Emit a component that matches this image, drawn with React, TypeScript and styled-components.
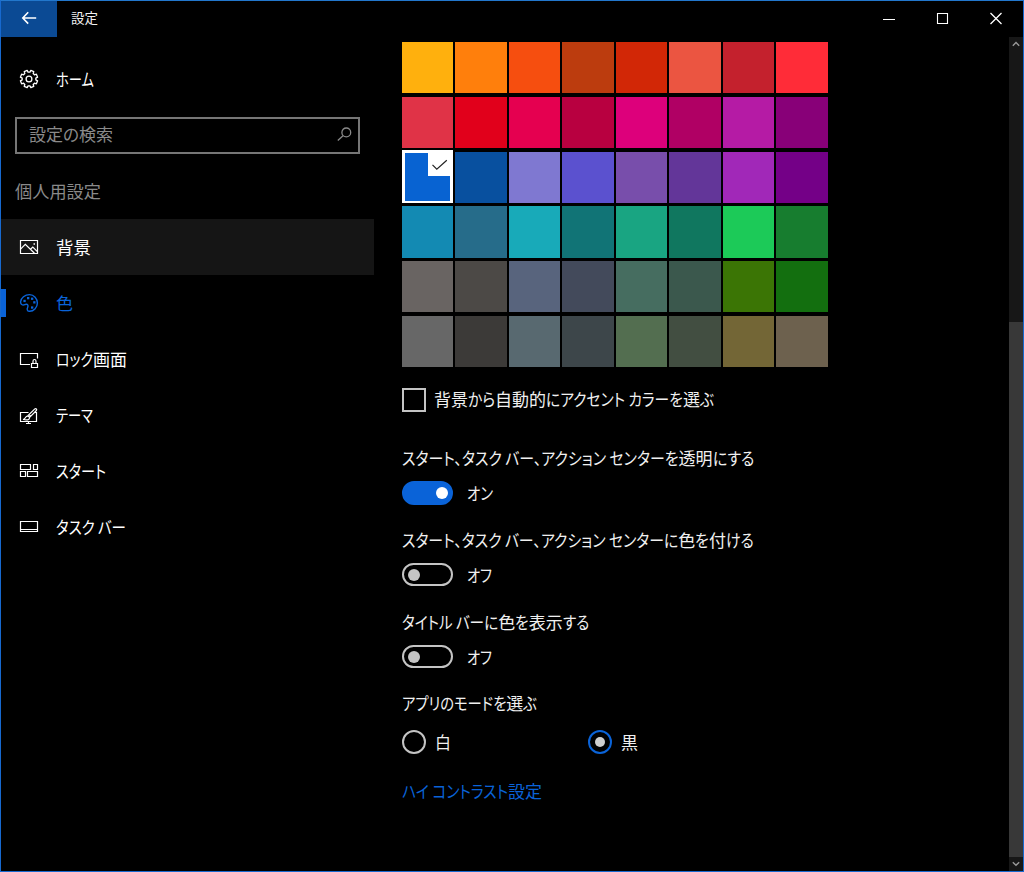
import React, { useLayoutEffect, useRef } from "react";
import styled, { createGlobalStyle } from "styled-components";

const ACCENT = "#0a63d8";

const GlobalStyle = createGlobalStyle`
  * { box-sizing: border-box; }
  body {
    margin: 0;
    background: #000;
    color: #f0f0f0;
    font-family: "Noto Sans CJK JP", "Noto Sans", sans-serif;
    font-size: 17px;
  }
`;

/* ---------- condensed kana text ---------- */

const Line = styled.span`
  display: inline-flex;
  white-space: pre;
  line-height: 22px;
  font-feature-settings: "palt" 1;
`;

const Run = styled.span`
  display: block;
  flex: none;
  transform-origin: 0 50%;
`;

const isKana = (c: string) => /[\u3001\u3040-\u30ff ]/.test(c);

function splitRuns(text: string) {
  const runs: { kana: boolean; value: string }[] = [];
  for (const c of text) {
    const kana = isKana(c);
    const last = runs[runs.length - 1];
    if (last && last.kana === kana) last.value += c;
    else runs.push({ kana, value: c });
  }
  return runs;
}

/* Kanji keep their full width; kana are condensed so the line fits `width`. */
function Text({ children, width }: { children: string; width: number }) {
  const ref = useRef<HTMLSpanElement>(null);
  const runs = splitRuns(children);
  useLayoutEffect(() => {
    const items = Array.from(ref.current!.children) as HTMLElement[];
    items.forEach((el) => {
      el.style.transform = "";
      el.style.marginRight = "";
    });
    const widths = items.map((el) => el.getBoundingClientRect().width);
    const sum = (kana: boolean) =>
      widths.reduce((a, w, i) => a + (runs[i].kana === kana ? w : 0), 0);
    const kanaWidth = sum(true);
    const allKanji = kanaWidth === 0;
    const k = allKanji ? width / sum(false) : (width - sum(false)) / kanaWidth;
    items.forEach((el, i) => {
      if (!allKanji && !runs[i].kana) return;
      el.style.transform = `scaleX(${k})`;
      el.style.marginRight = `${widths[i] * (k - 1)}px`;
    });
  }, [children, width]);
  return (
    <Line ref={ref}>
      {runs.map((r, i) => (
        <Run key={i}>{r.value}</Run>
      ))}
    </Line>
  );
}

/* ---------- window frame ---------- */

const Window = styled.div`
  width: 1024px;
  height: 872px;
  border: 1px solid #1769cf;
  border-top-color: #2277cc;
  display: flex;
  flex-direction: column;
  background: #000;
  overflow: hidden;
`;

const TitleBar = styled.header`
  height: 36px;
  flex: none;
  display: flex;
  align-items: center;
`;

const BackButton = styled.button`
  width: 56px;
  height: 36px;
  padding: 0 0 2px;
  border: 0;
  background: #0b4a94;
  color: #fff;
  display: flex;
  align-items: center;
  justify-content: center;
`;

const Title = styled.div`
  flex: 1;
  padding: 0 0 4px 14px;
  font-size: 13.5px;
  line-height: 0;
`;

const Caption = styled.button`
  width: 53.5px;
  height: 36px;
  padding: 0 0 2px;
  border: 0;
  background: none;
  color: #fff;
  display: flex;
  align-items: center;
  justify-content: center;
`;

const Body = styled.div`
  flex: 1;
  min-height: 0;
  display: flex;
`;

/* ---------- sidebar ---------- */

const Sidebar = styled.nav`
  width: 373px;
  flex: none;
  padding-top: 14px;
  display: flex;
  flex-direction: column;
`;

const NavItem = styled.a<{ $hover?: boolean; $active?: boolean }>`
  height: 56px;
  flex: none;
  display: flex;
  align-items: center;
  padding-left: ${(p) => (p.$active ? 0 : 19)}px;
  gap: 18px;
  color: ${(p) => (p.$active ? ACCENT : "#fff")};
  background: ${(p) => (p.$hover ? "#151515" : "transparent")};

  ${(p) => p.$active && `&::before {
    content: "";
    width: 5px;
    height: 28px;
    margin-right: -4px;
    background: ${ACCENT};
  }`}
`;

const SearchBox = styled.div`
  width: 345px;
  height: 37px;
  margin: 10px 0 0 14px;
  padding: 0 5px 3px 12px;
  border: 2px solid #767676;
  display: flex;
  align-items: center;
  justify-content: space-between;
  color: #8a8a8a;
`;

const SectionTitle = styled.div`
  height: 65px;
  padding: 26px 0 0 14px;
  color: #8a8a8a;
  line-height: 0;
`;

/* ---------- content ---------- */

const Content = styled.main`
  flex: 1;
  padding: 5px 0 0 28px;
  display: flex;
  flex-direction: column;
`;

const Palette = styled.div`
  display: grid;
  grid-template-columns: repeat(8, 51.4px);
  grid-auto-rows: 51.2px;
  gap: 3.6px 2.1px;
`;

const Swatch = styled.button<{ $color: string }>`
  padding: 0;
  border: 0;
  background: ${(p) => p.$color};
`;

const SelectedSwatch = styled(Swatch)`
  margin-top: -1.6px;
  border: solid #fff;
  border-width: 3px 3px 2px;
  display: flex;
  justify-content: flex-end;
  align-items: flex-start;
`;

const Tick = styled.span`
  width: 22px;
  height: 23px;
  background: #fff;
  display: flex;
`;

const CheckRow = styled.label`
  height: 24px;
  margin-top: 21px;
  display: flex;
  align-items: flex-start;
  gap: 8px;
`;

const CheckBox = styled.span`
  width: 24px;
  height: 24px;
  border: 2px solid #c4c4c4;
`;

const Setting = styled.section<{ $top: number }>`
  margin-top: ${(p) => p.$top}px;
  display: flex;
  flex-direction: column;
`;

const SettingName = styled.div`
  height: 34px;
  line-height: 0;
`;

const ToggleRow = styled.div`
  height: 24px;
  display: flex;
  align-items: center;
  gap: 14px;
`;

const Toggle = styled.span<{ $on?: boolean }>`
  width: 51.4px;
  height: ${(p) => (p.$on ? 24 : 23)}px;
  align-self: flex-start;
  border-radius: 12px;
  border: 2px solid ${(p) => (p.$on ? ACCENT : "#c4c4c4")};
  background: ${(p) => (p.$on ? ACCENT : "transparent")};
  display: flex;
  align-items: center;
  justify-content: ${(p) => (p.$on ? "flex-end" : "flex-start")};
  padding: 0 3.4px 0 4px;

  &::after {
    content: "";
    width: 12px;
    height: 12px;
    border-radius: 50%;
    background: ${(p) => (p.$on ? "#fff" : "#c4c4c4")};
  }
`;

const RadioRow = styled.div`
  height: 24px;
  display: flex;
  margin-top: 4px;
`;

const RadioOption = styled.label`
  width: 186px;
  display: flex;
  align-items: center;
  gap: 9px;
`;

const Radio = styled.span<{ $on?: boolean }>`
  width: 24px;
  height: 24px;
  border-radius: 50%;
  border: 2px solid ${(p) => (p.$on ? ACCENT : "#c4c4c4")};
  display: flex;
  align-items: center;
  justify-content: center;

  &::after {
    content: "";
    width: 10px;
    height: 10px;
    border-radius: 50%;
    background: ${(p) => (p.$on ? "#cfcfcf" : "transparent")};
  }
`;

const Link = styled.a`
  margin-top: 26px;
  line-height: 0;
  color: ${ACCENT};
`;

/* ---------- scrollbar ---------- */

const ScrollBar = styled.div`
  width: 14px;
  flex: none;
  display: flex;
  flex-direction: column;
  background: #171717;
`;

const ScrollArrow = styled.div`
  height: 14px;
  flex: none;
  display: flex;
  align-items: center;
  justify-content: center;
`;

const ScrollSpace = styled.div`
  height: 271px;
`;

const ScrollThumb = styled.div`
  flex: 1;
  background: #383838;
`;

/* ---------- icons ---------- */

const Icon = styled.svg<{ $weight?: number }>`
  width: 18px;
  height: 18px;
  flex: none;
  overflow: visible;
  fill: none;
  stroke: currentColor;
  stroke-width: ${(p) => p.$weight ?? 1.2};
`;

function gearPath() {
  const pts: string[] = [];
  for (let i = 0; i < 8; i++) {
    const a = (i * Math.PI) / 4;
    [[-0.26, 6.9], [-0.18, 8.8], [0.18, 8.8], [0.26, 6.9]].forEach(([d, r]) => {
      pts.push(`${(9 + r * Math.sin(a + d)).toFixed(2)} ${(9 - r * Math.cos(a + d)).toFixed(2)}`);
    });
  }
  return `M${pts.join("L")}Z`;
}

const GearIcon = () => (
  <Icon viewBox="0 0 18 18" $weight={1.3}>
    <path d={gearPath()} strokeLinejoin="round" transform="rotate(22.5 9 9)" />
    <circle cx="9" cy="9" r="2.9" />
  </Icon>
);

const PictureIcon = () => (
  <Icon viewBox="0 0 18 18">
    <path d="M.5 2.5h17v13H.5z" />
    <path d="M.8 10.8 5.3 6.3 14.5 15.3M10.5 11.3l2.3-2.2 4.6 4.6" />
    <path d="M13.5 6h1.5" strokeWidth="1.5" />
  </Icon>
);

const PaletteIcon = () => (
  <Icon viewBox="0 0 18 18" $weight={1.4}>
    <path d="M9.5.6C5 .6.8 4 .6 7.8.5 9.7 1.5 11 3.1 11c1.5 0 2.2-1 3.5-.7 1.5.4 1.7 1.6 1.1 2.9-.8 1.7-.8 3.9 1.5 4.1 4.4.3 8.2-3.7 8.2-8.2S14 .6 9.5.6z" />
    <g fill="currentColor" stroke="none">
      <rect x="7" y="3" width="2.3" height="2.3" />
      <rect x="11" y="3.6" width="2.3" height="2.3" />
      <rect x="13.2" y="7.2" width="2.3" height="2.3" />
      <rect x="3.4" y="5.8" width="2.3" height="2.3" />
      <rect x="11" y="12.4" width="2.3" height="2.3" />
    </g>
  </Icon>
);

const LockIcon = () => (
  <Icon viewBox="0 0 18 18">
    <path d="M10 14.5H.5v-11h17v5" />
    <path d="M11.5 13.5h6v4h-6zM13 13.3v-2.1q0-1.7 1.5-1.7t1.5 1.7v2.1" />
  </Icon>
);

const ThemeIcon = () => (
  <Icon viewBox="0 0 18 18">
    <path d="M8.5 6.5h-8v9h16v-9h-1.5M8.5 15.5v2M6 17.5h5" />
    <path
      transform="translate(0 2)"
      d="M3 11.5c2.5 0 2.2-3.3 4.4-3.3 1.3 0 2.1.8 2.1 1.8 0 1.8-2.5 2.5-6.5 1.5zM7.6 8 14.8.9c1.2-.7 2.4.5 1.6 1.6L9.6 9.4M9 6.5l2 2"
    />
  </Icon>
);

const StartIcon = () => (
  <Icon viewBox="0 0 18 18">
    <path d="M.5 2.5h10v5H.5zM13.5 2.5h4v5h-4zM.5 9.5h5v5h-5zM7.5 9.5h10v5h-10z" />
  </Icon>
);

const TaskbarIcon = () => (
  <Icon viewBox="0 0 18 18">
    <path d="M.5 3.5h17v10H.5zM.5 11.5h17" />
  </Icon>
);

const SearchIcon = () => (
  <Icon viewBox="0 0 18 18" $weight={1.3}>
    <circle cx="11.3" cy="7.4" r="4.4" />
    <path d="M8 10.7 2.8 15.5" />
  </Icon>
);

const BackIcon = () => (
  <Icon viewBox="0 0 18 18" $weight={1.6}>
    <path d="M8.2 3.3 2.8 9l5.4 5.6M2.8 9h13.4" />
  </Icon>
);

const MinimizeIcon = () => (
  <Icon viewBox="0 0 18 18" $weight={1}>
    <path d="M3 10.5h12" />
  </Icon>
);

const MaximizeIcon = () => (
  <Icon viewBox="0 0 18 18" $weight={1.1}>
    <path d="M3.5 4.5h10v10h-10z" />
  </Icon>
);

const CloseIcon = () => (
  <Icon viewBox="0 0 18 18" $weight={1.3}>
    <path d="M3.5 4 14.5 15M14.5 4 3.5 15" />
  </Icon>
);

const ArrowIcon = ({ down }: { down?: boolean }) => (
  <svg width="8" height="6" viewBox="0 0 8 6" fill="none" stroke="#999" strokeWidth="1.4">
    <path d={down ? "M.8 1.2 4 4.2l3.2-3" : "M.8 4.8 4 1.6l3.2 3.2"} />
  </svg>
);

/* ---------- data ---------- */

const COLORS = [
  "#ffb00d", "#ff7f0c", "#f64e0f", "#bc3c0e", "#d22706", "#eb5541", "#c4212d", "#ff2c38",
  "#e03347", "#e1001b", "#e50050", "#b80040", "#dd007b", "#b00064", "#b51ba5", "#880078",
  "#0863d2", "#08509f", "#7f78d1", "#5b51cf", "#784eab", "#633699", "#a128b8", "#740087",
  "#138ab3", "#266c8a", "#18aab9", "#117476", "#19a582", "#10775f", "#1cca58", "#177d2f",
  "#696462", "#4c4946", "#58647d", "#434a5b", "#466d60", "#3b584d", "#3b7505", "#136f0f",
  "#676767", "#3c3a38", "#586970", "#3d464a", "#536e50", "#424e41", "#736636", "#6d614e",
];

const SELECTED = 16;

const NAV = [
  { label: "背景", width: 35, icon: <PictureIcon />, hover: true },
  { label: "色", width: 17, icon: <PaletteIcon />, active: true },
  { label: "ロック画面", width: 71, icon: <LockIcon /> },
  { label: "テーマ", width: 37, icon: <ThemeIcon /> },
  { label: "スタート", width: 50, icon: <StartIcon /> },
  { label: "タスク バー", width: 70, icon: <TaskbarIcon /> },
];

export default function App() {
  return (
    <Window>
      <GlobalStyle />
      <TitleBar>
        <BackButton><BackIcon /></BackButton>
        <Title><Text width={27}>設定</Text></Title>
        <Caption><MinimizeIcon /></Caption>
        <Caption><MaximizeIcon /></Caption>
        <Caption><CloseIcon /></Caption>
      </TitleBar>
      <Body>
        <Sidebar>
          <NavItem>
            <GearIcon />
            <Text width={38}>ホーム</Text>
          </NavItem>
          <SearchBox>
            <Text width={84}>設定の検索</Text>
            <SearchIcon />
          </SearchBox>
          <SectionTitle><Text width={86}>個人用設定</Text></SectionTitle>
          {NAV.map((n) => (
            <NavItem key={n.label} $hover={n.hover} $active={n.active}>
              {n.icon}
              <Text width={n.width}>{n.label}</Text>
            </NavItem>
          ))}
        </Sidebar>
        <Content>
          <Palette>
            {COLORS.map((c, i) =>
              i === SELECTED ? (
                <SelectedSwatch key={i} $color={c}>
                  <Tick>
                    <svg width="22" height="23" viewBox="0 0 22 23" fill="none" stroke="#222" strokeWidth="1.2">
                      <path d="m4.5 11.8 4.3 4.3L18.8 7.3" />
                    </svg>
                  </Tick>
                </SelectedSwatch>
              ) : (
                <Swatch key={i} $color={c} />
              )
            )}
          </Palette>
          <CheckRow>
            <CheckBox />
            <Text width={280}>背景から自動的にアクセント カラーを選ぶ</Text>
          </CheckRow>
          <Setting $top={35}>
            <SettingName><Text width={352}>スタート、タスク バー、アクション センターを透明にする</Text></SettingName>
            <ToggleRow><Toggle $on /><Text width={26}>オン</Text></ToggleRow>
          </Setting>
          <Setting $top={24}>
            <SettingName><Text width={352}>スタート、タスク バー、アクション センターに色を付ける</Text></SettingName>
            <ToggleRow><Toggle /><Text width={25}>オフ</Text></ToggleRow>
          </Setting>
          <Setting $top={24}>
            <SettingName><Text width={187}>タイトル バーに色を表示する</Text></SettingName>
            <ToggleRow><Toggle /><Text width={25}>オフ</Text></ToggleRow>
          </Setting>
          <Setting $top={23}>
            <SettingName><Text width={135}>アプリのモードを選ぶ</Text></SettingName>
            <RadioRow>
              <RadioOption><Radio /><Text width={16}>白</Text></RadioOption>
              <RadioOption><Radio $on /><Text width={17}>黒</Text></RadioOption>
            </RadioRow>
          </Setting>
          <Link><Text width={140}>ハイ コントラスト設定</Text></Link>
        </Content>
        <ScrollBar>
          <ScrollArrow><ArrowIcon /></ScrollArrow>
          <ScrollSpace />
          <ScrollThumb />
          <ScrollArrow><ArrowIcon down /></ScrollArrow>
        </ScrollBar>
      </Body>
    </Window>
  );
}
